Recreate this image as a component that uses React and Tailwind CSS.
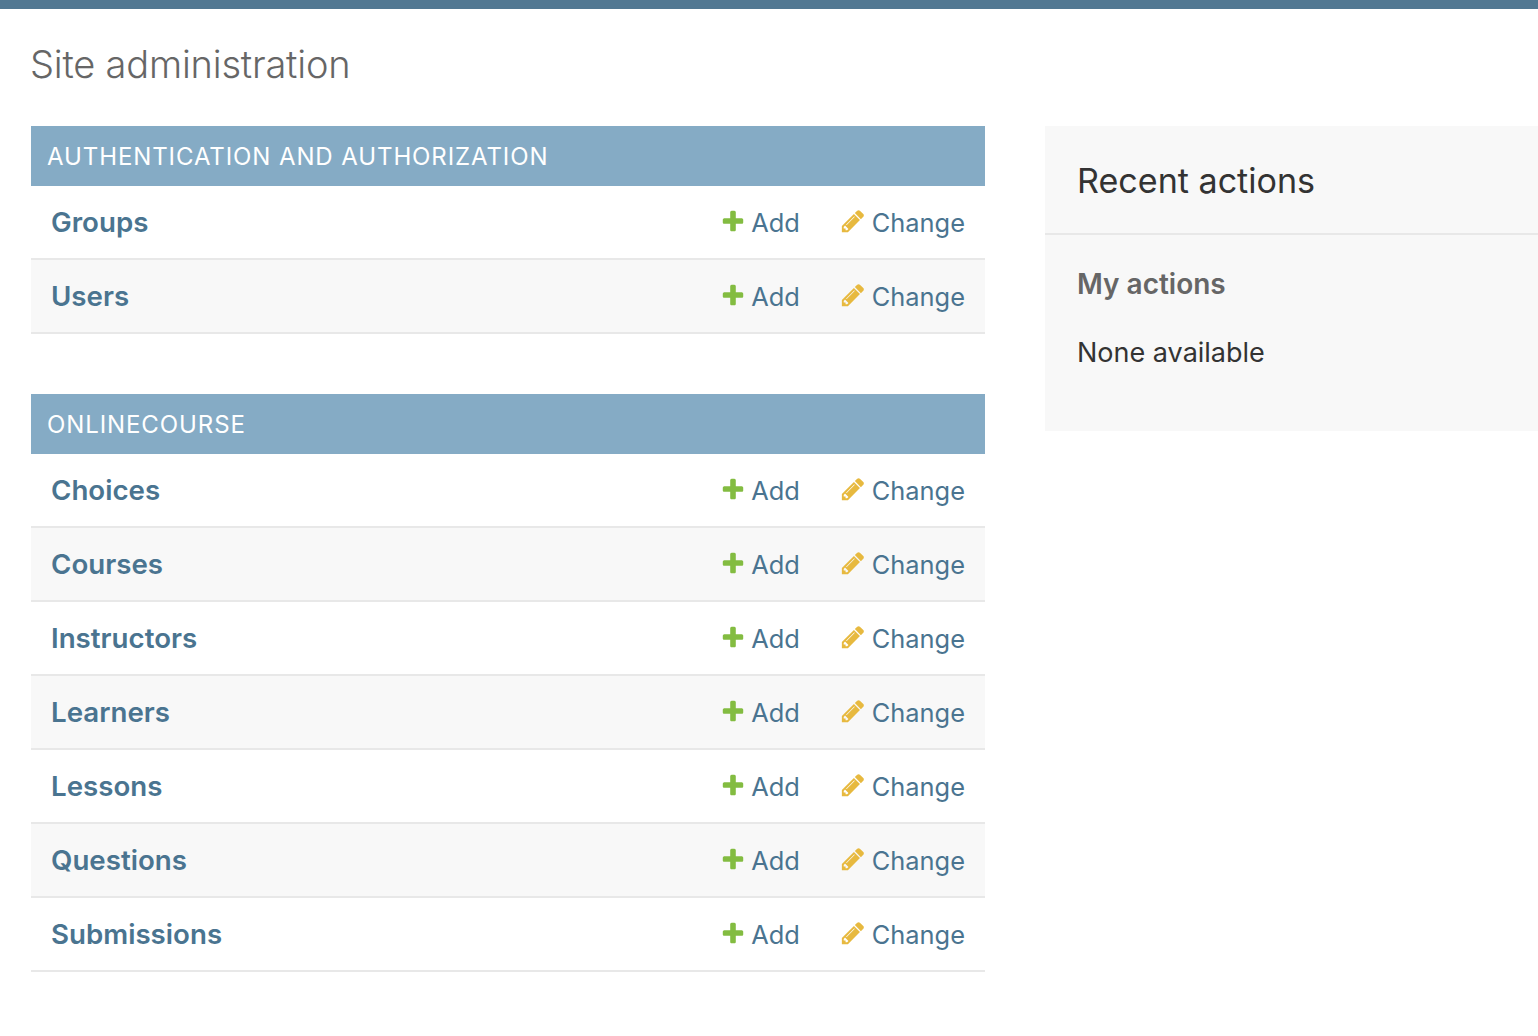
const sections = [
  { title: "Authentication and Authorization", rows: ["Groups", "Users"] },
  {
    title: "Onlinecourse",
    rows: ["Choices", "Courses", "Instructors", "Learners", "Lessons", "Questions", "Submissions"],
  },
];

const PlusIcon = () => (
  <svg viewBox="0 0 1792 1792" className="w-[26px] h-[26px] shrink-0 -mt-[2px]" fill="#83bc41">
    <path d="M1600 736v192q0 40-28 68t-68 28h-416v416q0 40-28 68t-68 28h-192q-40 0-68-28t-28-68v-416h-416q-40 0-68-28t-28-68v-192q0-40 28-68t68-28h416v-416q0-40 28-68t68-28h192q40 0 68 28t28 68v416h416q40 0 68 28t28 68z" />
  </svg>
);

const PencilIcon = () => (
  <svg viewBox="0 0 1792 1792" className="w-[26px] h-[26px] shrink-0 -mt-[3px]" fill="#e7b93f">
    <path d="M491 1536l91-91-235-235-91 91v107h128v128h107zm523-928q0-22-22-22-10 0-17 7l-542 542q-7 7-7 17 0 22 22 22 10 0 17-7l542-542q7-7 7-17zm-54-192l416 416-832 832h-416v-416zm683 96q0 53-37 90l-166 166-416-416 166-165q36-38 90-38 53 0 91 38l235 234q37 39 37 91z" />
  </svg>
);

const Row = ({ name, striped }) => (
  <div className={`flex items-center h-[74px] pl-5 pr-5 border-b-2 border-[#e8e8e8] ${striped ? "bg-[#f8f8f8]" : "bg-white"}`}>
    <a href="#" className="flex-1 pt-[2px] text-[27.7px] font-semibold text-[#4a7490]">{name}</a>
    <a href="#" className="flex items-center gap-[5px] pt-[2px] text-[#4a7490] text-[25.4px]">
      <PlusIcon />
      Add
    </a>
    <a href="#" className="flex items-center gap-[6px] ml-[40px] pt-[2px] text-[#4a7490] text-[25.4px]">
      <PencilIcon />
      Change
    </a>
  </div>
);

export default function App() {
  return (
    <div className="min-h-[1036px] bg-white overflow-hidden font-['Inter',sans-serif]">
      <div className="h-[9px] bg-[#527892]" />
      <div className="pl-[31px]">
        <h1 className="mt-[31px] mb-[38px] h-[48px] -ml-px text-[38px] leading-[48px] font-light tracking-[-0.2px] text-[#666666]">Site administration</h1>
        <div className="flex gap-[60px]">
          <div className="w-[954px] shrink-0">
            {sections.map((section) => (
              <div key={section.title} className="mb-[60px]">
                <div className="h-[60px] flex items-center pl-4 pt-[2px] bg-[#85abc5] text-white text-[24px] uppercase tracking-[0.9px]">
                  {section.title}
                </div>
                {section.rows.map((name, i) => (
                  <Row key={name} name={name} striped={i % 2 === 1} />
                ))}
              </div>
            ))}
          </div>
          <div className="flex-1 h-[305px] bg-[#f8f8f8]">
            <div className="h-[109px] flex items-center pl-8 pt-[2px] border-b-2 border-[#e8e8e8] text-[34.1px] text-[#333333]">
              Recent actions
            </div>
            <div className="pl-8 pt-[29px]">
              <h3 className="text-[28px] leading-[40px] font-semibold text-[#666666]">My actions</h3>
              <p className="mt-[29px] text-[27px] leading-[40px] text-[#333333]">None available</p>
            </div>
          </div>
        </div>
      </div>
    </div>
  );
}
